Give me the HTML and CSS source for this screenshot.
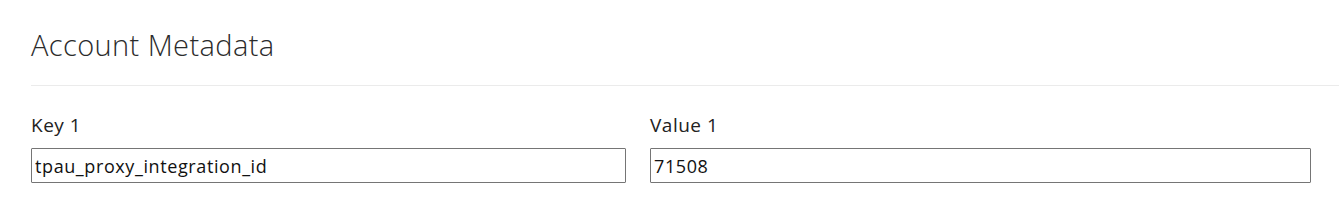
FILE: index.html
```html
<!DOCTYPE html>
<html lang="en">
<head>
    <meta charset="UTF-8">
    <title>Account Metadata</title>
    <link rel="stylesheet" href="styles.css">
</head>
<body>
    <div class="section">
        <h2 class="section-title">Account Metadata</h2>
        <div class="meta-row">
            <div class="field">
                <label for="key1">Key 1</label>
                <input id="key1" type="text" value="tpau_proxy_integration_id">
            </div>
            <div class="field">
                <label for="value1">Value 1</label>
                <input id="value1" type="text" value="71508">
            </div>
        </div>
    </div>
</body>
</html>
```
FILE: styles.css
```css
*{
    padding: 0;
    margin: 0;
    box-sizing: border-box;
}
body{
    background: #fff;
    font-family: "Open Sans", "Noto Sans", sans-serif;
    color: #222;
}
.section{
    padding: 26px 0 0 31px;
}
.section .section-title{
    font-size: 29px;
    font-weight: 300;
    letter-spacing: 0.4px;
    color: #2b2b2b;
    line-height: 38px;
    padding-bottom: 21px;
    border-bottom: 1px solid #ebebeb;
}
.meta-row{
    display: grid;
    grid-template-columns: 595px 661px;
    gap: 24px;
    padding-top: 26px;
}
.field label{
    display: block;
    font-size: 19px;
    letter-spacing: 0.5px;
    line-height: 26px;
    color: #222;
    margin-bottom: 10px;
}
.field input{
    display: block;
    width: 100%;
    height: 35px;
    border: 1px solid #757575;
    border-radius: 1px;
    padding: 0 3px;
    font-family: inherit;
    font-size: 18px;
    letter-spacing: 0.6px;
    color: #111;
    outline: none;
}
```
